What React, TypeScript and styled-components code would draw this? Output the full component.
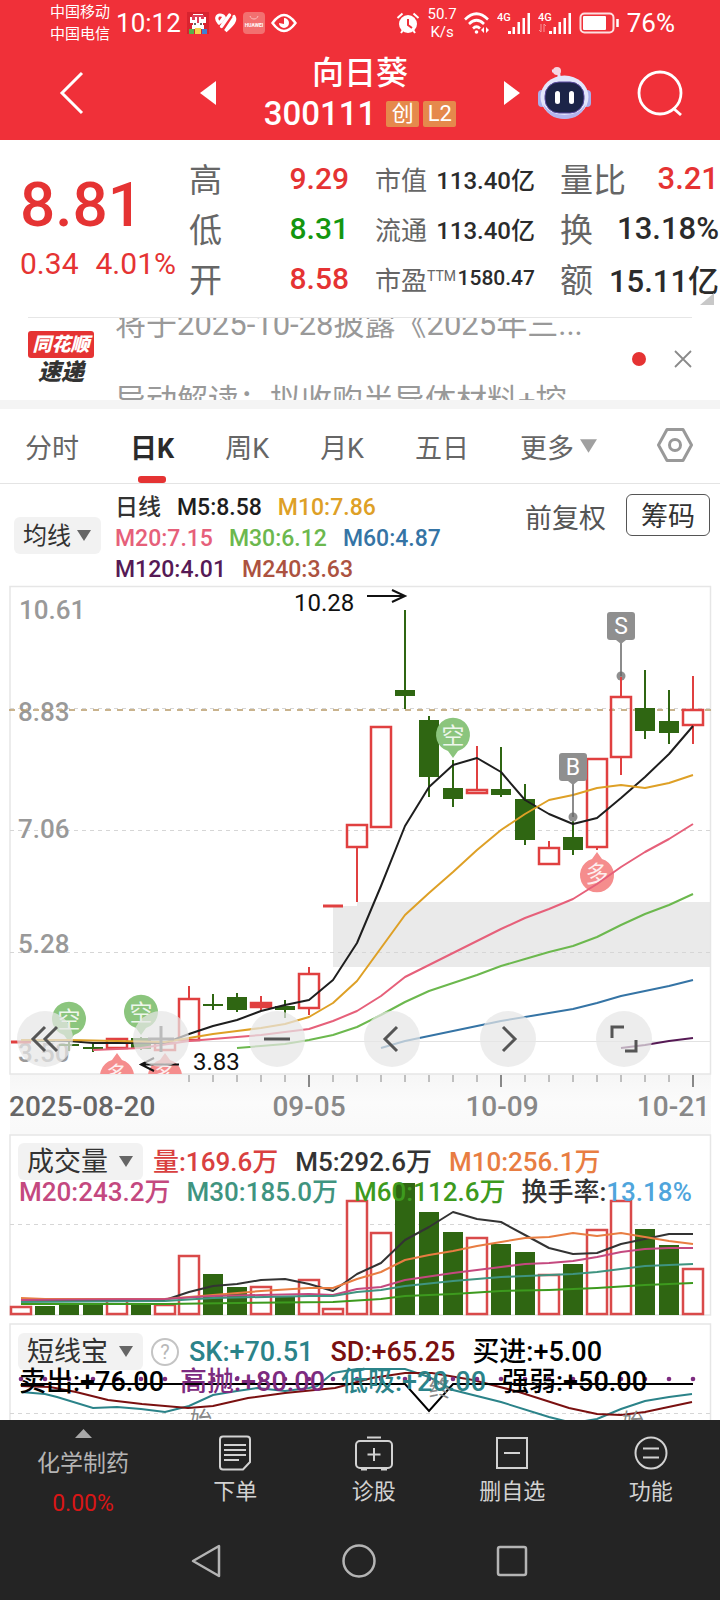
import React from "react";
import styled, { createGlobalStyle } from "styled-components";

const GlobalStyle = createGlobalStyle`
  * { box-sizing: border-box; }
  body {
    margin: 0;
    background: #242424;
    font-family: Roboto, "Noto Sans CJK SC", sans-serif;
    color: #333;
  }
  button, select {
    font-family: inherit;
    color: inherit;
    border: 0;
    padding: 0;
    margin: 0;
    background: none;
  }
  svg { display: block; }
  svg text { font-family: Roboto, "Noto Sans CJK SC", sans-serif; }
`;

const RED = "#e53333";
const UP = "#e04040";
const DOWN = "#2f6612";

const Page = styled.div`
  min-height: 100vh;
  display: flex;
  flex-direction: column;
  overflow: hidden;
`;

const Main = styled.main`
  background: #fff;
`;

/* ---------- status bar ---------- */

const StatusBar = styled.div`
  height: 46px;
  padding: 0 45px 0 50px;
  background: #f03039;
  color: #fff;
  display: flex;
  justify-content: space-between;
  align-items: center;
`;

const StatusGroup = styled.div<{ $gap: number }>`
  display: flex;
  align-items: center;
  gap: ${(p) => p.$gap}px;
`;

const Carriers = styled.div`
  font-size: 15px;
  line-height: 22px;
`;

const StatusText = styled.span`
  font-size: 26px;
  line-height: 30px;
`;

const Speed = styled.div`
  font-size: 15px;
  line-height: 18px;
  text-align: center;
`;

/* ---------- title bar ---------- */

const Header = styled.header`
  height: 94px;
  padding: 0 36px 0 50px;
  background: #f03039;
  color: #fff;
  display: grid;
  grid-template-columns: 150px 1fr 116px 48px;
  align-items: center;
`;

const IconButton = styled.button`
  display: flex;
  align-items: center;
  cursor: pointer;
`;

const HeaderTitle = styled.div`
  display: flex;
  align-items: center;
  justify-content: space-between;
`;

const StockName = styled.h1`
  margin: 0;
  font-size: 32px;
  line-height: 42px;
  font-weight: 500;
  text-align: center;
`;

const StockCode = styled.div`
  display: flex;
  align-items: center;
  justify-content: center;
  gap: 4px;
  font-size: 33px;
  line-height: 40px;
  font-weight: 500;
`;

const Badge = styled.span`
  background: #e5894c;
  border-radius: 2px;
  width: 33px;
  font-size: 22px;
  line-height: 26px;
  font-weight: 400;
  text-align: center;
  &:first-of-type { margin-left: 6px; }
`;

/* ---------- quote ---------- */

const Quote = styled.section`
  height: 177px;
  padding: 13px 1px 0 20px;
  display: grid;
  grid-template-columns: 169px 160px 26px 160px 25px 1fr;
  position: relative;
`;

const PriceBlock = styled.div`
  color: ${RED};
  padding-top: 15px;
`;

const Price = styled.div`
  font-size: 62px;
  line-height: 74px;
  font-weight: 500;
`;

const Change = styled.div`
  display: flex;
  gap: 17px;
  font-size: 30px;
  line-height: 44px;
`;

const Stats = styled.dl<{ $column: number; $label: number; $value: number }>`
  margin: 0;
  grid-column: ${(p) => p.$column};
  font-size: ${(p) => p.$label}px;
  --value-size: ${(p) => p.$value}px;
`;

const Stat = styled.div`
  display: flex;
  justify-content: space-between;
  align-items: center;
  height: 50px;
  white-space: nowrap;
`;

const StatLabel = styled.dt`
  color: #666;
  sup {
    font-size: 14px;
    line-height: 1;
    vertical-align: 9px;
  }
`;

const StatValue = styled.dd<{ $color?: string; $small?: boolean }>`
  margin: 0;
  font-size: ${(p) => (p.$small ? "21px" : "var(--value-size)")};
  font-weight: 500;
  color: ${(p) => p.$color || "#2b2b2b"};
`;

const Corner = styled.svg`
  position: absolute;
  right: 6px;
  bottom: 12px;
`;

/* ---------- news ---------- */

const News = styled.section`
  height: 83px;
  margin: 0 28px;
  border-top: 1px solid #e6e6e6;
  display: flex;
  align-items: center;
`;

const NewsLogo = styled.div`
  width: 87px;
  font-weight: 900;
  font-style: italic;
`;

const LogoTop = styled.div`
  width: 66px;
  background: ${RED};
  color: #fff;
  border-radius: 3px;
  font-size: 19px;
  line-height: 27px;
  text-align: center;
`;

const LogoBottom = styled.div`
  width: 66px;
  font-size: 23px;
  line-height: 29px;
  text-align: center;
`;

const Ticker = styled.div`
  flex: 1;
  height: 82px;
  overflow: hidden;
  color: #999;
  font-size: 31px;
  white-space: nowrap;
`;

const TickerLine = styled.div`
  height: 76px;
  line-height: 76px;
  margin-top: -31px;
  & + & { margin-top: 0; }
`;

const RedDot = styled.span`
  width: 14px;
  height: 14px;
  border-radius: 50%;
  background: ${RED};
  margin-right: 28px;
`;

const Divider = styled.div`
  height: 9px;
  background: #f4f4f4;
`;

/* ---------- tabs ---------- */

const Tabs = styled.nav`
  height: 75px;
  padding: 0 27px 0 25px;
  border-bottom: 1px solid #e4e4e4;
  display: flex;
  align-items: stretch;
  gap: 51px;
`;

const Tab = styled.button<{ $active?: boolean }>`
  display: flex;
  align-items: center;
  gap: 6px;
  font-size: 27px;
  color: ${(p) => (p.$active ? "#2b2b2b" : "#666")};
  font-weight: ${(p) => (p.$active ? 700 : 400)};
  position: relative;
  white-space: nowrap;
  cursor: pointer;
  &::after {
    content: "";
    display: ${(p) => (p.$active ? "block" : "none")};
    position: absolute;
    left: 50%;
    bottom: 0;
    margin-left: -14px;
    width: 28px;
    height: 7px;
    border-radius: 3px;
    background: ${RED};
  }
`;

const Settings = styled(IconButton)`
  margin-left: auto;
  padding-bottom: 2px;
`;

/* ---------- legends ---------- */

const LegendBar = styled.section`
  height: 96px;
  padding: 0 10px 0 14px;
  display: flex;
  align-items: flex-start;
`;

const PickerBox = styled.span<{ $width: number }>`
  display: inline-grid;
  align-items: center;
  width: ${(p) => p.$width}px;
  height: 37px;
  background: #f2f2f2;
  border-radius: 6px;
  & > * { grid-area: 1 / 1; }
  & > svg {
    justify-self: end;
    margin-right: 10px;
    pointer-events: none;
  }
`;

const PickerSelect = styled.select<{ $size: number }>`
  appearance: none;
  width: 100%;
  height: 37px;
  padding-left: 9px;
  font-size: ${(p) => p.$size}px;
  color: #333;
`;

const MaPicker = styled.div`
  width: 101px;
  padding-top: 33px;
`;

const MaLegend = styled.div`
  flex: 1;
  padding-top: 8px;
  font-size: 23px;
  line-height: 31px;
  font-weight: 500;
`;

const LegendRow = styled.div`
  display: flex;
  gap: 16px;
  white-space: nowrap;
`;

const Tint = styled.span<{ $color: string }>`
  color: ${(p) => p.$color};
`;

const Adjust = styled.button`
  font-size: 27px;
  line-height: 40px;
  padding-top: 15px;
  margin-right: 20px;
  color: #555;
`;

const ChipButton = styled.button`
  width: 84px;
  height: 42px;
  margin-top: 10px;
  padding-top: 2px;
  border: 1px solid #555;
  border-radius: 6px;
  font-size: 27px;
  line-height: 40px;
  color: #333;
`;

/* ---------- charts ---------- */

const ChartPanel = styled.section`
  position: relative;
  & > svg { width: 100%; height: auto; }
`;

const ChartTools = styled.div`
  position: absolute;
  left: 17px;
  right: 68px;
  bottom: 63px;
  display: flex;
  justify-content: space-between;
`;

const ToolButton = styled.button`
  width: 56px;
  height: 56px;
  border-radius: 50%;
  background: rgba(230, 230, 230, 0.72);
  display: flex;
  align-items: center;
  justify-content: center;
  color: #555;
  &:disabled { color: #bbb; }
`;

const OverlayPanel = styled.section`
  display: grid;
  & > * { grid-area: 1 / 1; }
  & > svg { width: 100%; height: auto; }
`;

const OverlayLegend = styled.div<{ $size: number }>`
  padding: 13px 18px 0;
  font-size: ${(p) => p.$size}px;
  line-height: 30px;
  font-weight: 500;
`;

const LegendHead = styled.div`
  display: flex;
  align-items: center;
  gap: 17px;
  height: 37px;
  white-space: nowrap;
  & > :first-child { margin-right: -7px; }
`;

const LegendTail = styled(LegendRow)`
  padding-left: 1px;
  margin-top: -3px;
`;

const Help = styled.button`
  width: 28px;
  height: 28px;
  margin: 0 -7px 0 -2px;
  border: 2px solid #c4c4c4;
  border-radius: 50%;
  font-size: 20px;
  line-height: 24px;
  color: #b8b8b8;
`;

/* ---------- bottom ---------- */

const BottomBar = styled.footer`
  background: #242424;
  color: #d2d2d2;
  display: grid;
  grid-template-columns: 166px repeat(4, 1fr);
  height: 110px;
`;

const BottomButton = styled.button`
  display: flex;
  flex-direction: column;
  align-items: center;
  padding-top: 15px;
  gap: 3px;
  font-size: 22px;
  line-height: 36px;
`;

const Sector = styled.button`
  display: flex;
  flex-direction: column;
  align-items: center;
  padding-top: 9px;
  font-size: 23px;
  line-height: 40px;
  color: #b4b4b4;
  & > svg { margin-bottom: 6px; }
`;

const SectorChange = styled.span`
  color: #d81616;
`;

const NavBar = styled.nav`
  background: #242424;
  height: 70px;
  padding: 0 190px;
  display: flex;
  justify-content: space-between;
  & > button { height: 62px; }
`;

/* ---------- data ---------- */

type Pt = [number, number];
type Candle = { up: boolean; top: number; bottom: number; high: number; low: number };

const slot = (i: number) => 21 + 24 * i;
const c = (up: number, top: number, bottom: number, high: number, low: number): Candle => ({
  up: up === 1, top, bottom, high, low,
});

const candles: Candle[] = [
  c(1, 462, 462, 462, 462), c(0, 461, 461, 461, 461), c(0, 465, 465, 460, 471), c(0, 468, 468, 463, 472),
  c(1, 459, 468, 458, 469), c(0, 458, 469, 457, 470), c(1, 463, 470, 462, 470), c(1, 419, 460, 406, 461),
  c(0, 425, 425, 414, 430), c(0, 417, 430, 413, 432), c(1, 423, 427, 416, 431), c(0, 426, 430, 420, 438),
  c(1, 394, 428, 387, 435), c(1, 326, 326, 326, 326), c(1, 245, 267, 245, 322), c(1, 147, 247, 147, 247),
  c(0, 110, 116, 30, 129), c(0, 140, 197, 136, 217), c(0, 208, 219, 180, 227), c(1, 210, 213, 166, 213),
  c(0, 209, 215, 167, 217), c(0, 219, 260, 204, 265), c(1, 268, 284, 261, 284), c(0, 257, 270, 238, 275),
  c(1, 179, 267, 179, 270), c(1, 117, 177, 95, 195), c(0, 128, 151, 90, 159), c(0, 141, 153, 110, 164),
  c(1, 130, 145, 96, 164),
];

const priceLines: { color: string; points: Pt[] }[] = [
  { color: "#1e1e1e", points: [[21, 460], [69, 461], [93, 463], [117, 463], [165, 463], [189, 454], [213, 446], [237, 440], [261, 431], [285, 425], [309, 420], [333, 400], [357, 363], [381, 306], [405, 246], [429, 207], [453, 185], [477, 178], [501, 192], [525, 220], [549, 234], [573, 244], [597, 238], [621, 218], [645, 197], [669, 174], [693, 146]] },
  { color: "#dea026", points: [[21, 460], [45, 460], [69, 460], [117, 461], [165, 462], [189, 458], [213, 454], [237, 451], [261, 448], [285, 444], [309, 437], [333, 423], [357, 401], [381, 368], [405, 335], [429, 313], [453, 292], [477, 270], [501, 250], [525, 234], [549, 220], [573, 215], [597, 208], [621, 205], [645, 208], [669, 203], [693, 195]] },
  { color: "#e6607a", points: [[93, 470], [141, 468], [189, 461], [237, 457], [261, 455], [285, 452], [309, 449], [333, 441], [357, 431], [381, 416], [405, 397], [429, 385], [453, 373], [477, 361], [501, 349], [525, 338], [549, 329], [573, 319], [597, 304], [621, 287], [645, 272], [669, 259], [693, 244]] },
  { color: "#6cb84e", points: [[237, 468], [261, 466], [285, 464], [309, 460], [333, 455], [357, 447], [381, 435], [405, 422], [429, 411], [453, 403], [477, 395], [501, 386], [525, 379], [549, 372], [573, 366], [597, 357], [621, 345], [645, 334], [669, 325], [693, 314]] },
  { color: "#3574a5", points: [[381, 468], [405, 461], [429, 456], [453, 451], [501, 441], [549, 433], [573, 429], [597, 423], [621, 416], [645, 411], [669, 406], [693, 400]] },
  { color: "#561a55", points: [[621, 468], [645, 465], [669, 461], [693, 458]] },
];

const volumes = [182, 181, 180, 180, 175, 179, 180, 131, 149, 162, 162, 172, 155, 184, 76, 108, 58, 87, 107, 113, 119, 127, 150, 139, 105, 76, 104, 120, 144];

const volumeLines: { color: string; points: Pt[] }[] = [
  { color: "#333", points: [[21, 175], [165, 175], [189, 167], [213, 161], [237, 159], [261, 155], [285, 154], [309, 159], [333, 166], [357, 149], [381, 138], [405, 115], [429, 102], [453, 87], [477, 94], [501, 97], [525, 110], [549, 123], [573, 129], [597, 128], [621, 119], [645, 114], [669, 109], [693, 109]] },
  { color: "#e87d42", points: [[21, 173], [45, 174], [165, 174], [189, 172], [213, 170], [261, 166], [309, 163], [333, 163], [357, 154], [381, 147], [405, 135], [429, 130], [453, 126], [477, 121], [501, 117], [525, 113], [549, 112], [573, 108], [597, 111], [621, 108], [645, 112], [669, 116], [693, 119]] },
  { color: "#c4497f", points: [[21, 175], [165, 174], [213, 171], [261, 170], [309, 169], [333, 170], [357, 164], [381, 162], [405, 155], [453, 148], [501, 142], [525, 139], [549, 138], [573, 136], [597, 132], [621, 127], [645, 124], [669, 123], [693, 123]] },
  { color: "#3f9480", points: [[21, 177], [165, 176], [213, 173], [309, 171], [333, 171], [357, 167], [381, 165], [405, 161], [453, 156], [501, 152], [549, 150], [573, 149], [597, 147], [621, 144], [645, 141], [693, 139]] },
  { color: "#3d9a1e", points: [[21, 179], [165, 179], [237, 178], [333, 177], [381, 174], [405, 171], [453, 169], [501, 166], [549, 165], [597, 163], [645, 160], [693, 158]] },
];

const sk: Pt[] = [[21, 72], [45, 74], [57, 77], [93, 88], [117, 87], [141, 89], [165, 92], [189, 86], [213, 75], [237, 71], [257, 68], [285, 71], [309, 68], [317, 66], [333, 53], [357, 49], [405, 49], [429, 57], [453, 70], [501, 82], [549, 97], [573, 103], [597, 99], [621, 89], [645, 81], [669, 77], [692, 74]];
const sd: Pt[] = [[21, 66], [50, 67], [76, 72], [108, 80], [142, 84], [188, 88], [213, 86], [248, 78], [285, 73], [335, 68], [372, 58], [405, 53], [432, 53], [473, 60], [519, 72], [569, 88], [597, 94], [621, 95], [645, 92], [692, 82]];

const path = (pts: Pt[]) => pts.map((p) => p.join(",")).join(" ");

const Triangle = ({ size = 14, color = "#666" }: { size?: number; color?: string }) => (
  <svg width={size} height={size - 3} viewBox="0 0 14 11"><path d="M0 0h14L7 11z" fill={color} /></svg>
);

const Picker = ({ label, width, size, options }: { label: string; width: number; size: number; options: string[] }) => (
  <PickerBox $width={width}>
    <PickerSelect $size={size} aria-label={label}>
      {options.map((o) => <option key={o}>{o}</option>)}
    </PickerSelect>
    <Triangle />
  </PickerBox>
);

const Pin = ({ x, y, up, label }: { x: number; y: number; up: boolean; label: string }) => (
  <g>
    <path
      d={up
        ? `M${x} ${y - 22}l5 7a17 17 0 1 1 -10 0z`
        : `M${x} ${y + 22}l5 -7a17 17 0 1 0 -10 0z`}
      fill={up ? "#f58d8d" : "#8bc57d"}
    />
    <text x={x} y={y + 8} fontSize="23" textAnchor="middle" fill="#fff" opacity="0.85">{label}</text>
  </g>
);

const Signal = ({ x, top, dot, label }: { x: number; top: number; dot: number; label: string }) => (
  <g>
    <circle cx={x} cy={dot} r="4.5" fill="#8f8f8f" />
    <path d={`M${x} ${top + 28}V${dot}`} stroke="#666" strokeWidth="1.5" />
    <rect x={x - 14} y={top} width="28" height="28" rx="3" fill="#8f8f8f" />
    <path d={`M${x - 5} ${top + 28}h10l-5 4z`} fill="#8f8f8f" />
    <text x={x} y={top + 22} fontSize="23" textAnchor="middle" fill="#fff">{label}</text>
  </g>
);

const PriceChart = () => (
  <svg viewBox="0 0 720 550" role="img" aria-label="日K线图">
    <defs>
      <clipPath id="plot"><rect x="9" y="6" width="702" height="488" /></clipPath>
      <linearGradient id="axis" x1="0" y1="0" x2="0" y2="1">
        <stop offset="0" stopColor="#f6f6f6" /><stop offset="0.5" stopColor="#fbfbfb" /><stop offset="1" stopColor="#f9f9f9" />
      </linearGradient>
    </defs>
    <rect x="10" y="494" width="701" height="56" fill="url(#axis)" />
    <path d="M333 326H357V322H711V387H333z" fill="#eaeaea" />
    <rect x="10" y="6.5" width="700.5" height="487.5" fill="none" stroke="#e6e6e6" strokeWidth="1.5" />
    {[128.5, 250.5, 372.5].map((y) => (
      <path key={y} d={`M10 ${y}H710`} stroke="#d6d6d6" strokeDasharray="4 4" />
    ))}
    <path d="M10 461.500H710" stroke="#e2e2e2" />
    <g fontSize="26" fontWeight="500" fill="#999">
      <text x="19" y="39">10.61</text>
      <text x="18" y="141">8.83</text>
      <text x="18" y="258">7.06</text>
      <text x="18" y="373">5.28</text>
      <text x="18" y="482">3.50</text>
    </g>
    <path d="M9 130H711" stroke="#b89a68" strokeWidth="1.500" strokeDasharray="6 6" />
    <g clipPath="url(#plot)">
      {candles.map((k, i) => {
        const x = slot(i);
        const color = k.up ? UP : DOWN;
        const flat = k.bottom === k.top;
        return (
          <g key={i} stroke={color} strokeWidth="2">
            {k.high < k.top && <path d={`M${x} ${k.high}V${k.top}`} />}
            {k.low > k.bottom && <path d={`M${x} ${k.bottom}V${k.low}`} />}
            {flat && <path d={`M${x - 10} ${k.top}H${x + 10}`} strokeWidth={k.up ? 3 : 2} />}
            {!flat && k.up && <rect x={x - 10} y={k.top} width="20" height={k.bottom - k.top} fill={i === 10 ? UP : "none"} strokeWidth="2.5" />}
            {!flat && !k.up && <rect x={x - 10} y={k.top} width="20" height={k.bottom - k.top} fill={color} stroke="none" />}
          </g>
        );
      })}
      <Pin x={453} y={156} up={false} label="空" />
      <Pin x={69} y={440} up={false} label="空" />
      <Pin x={141} y={433} up={false} label="空" />
      <Pin x={597} y={294} up label="多" />
      <Pin x={117} y={495} up label="多" />
      <Pin x={165} y={495} up label="多" />
      {priceLines.map((l) => (
        <polyline key={l.color} points={path(l.points)} fill="none" stroke={l.color} strokeWidth="2" strokeLinejoin="round" />
      ))}
      <Signal x={621} top={32} dot={96} label="S" />
      <Signal x={573} top={173} dot={237} label="B" />
      <path d="M621 97V115" stroke={UP} strokeWidth="2" />
    </g>
    <g fontSize="24" fill="#111">
      <text x="294" y="31">10.28</text>
      <text x="193" y="490">3.83</text>
    </g>
    <path d="M367 16H405M392 10l13 6-13 6M179 484.500H141M154 478l-13 6.500 13 6.500" fill="none" stroke="#111" strokeWidth="2" />
    {candles.map((_, i) => {
      if (i < 7) return null;
      const major = i === 12 || i === 20 || i === 28;
      return <path key={i} d={`M${slot(i)} 495V${major ? 507 : 502}`} stroke="#888" strokeWidth={major ? 2 : 1} />;
    })}
    <g fontSize="28" fontWeight="500" fill="#888">
      <text x="9" y="536" fill="#666">2025-08-20</text>
      <text x="309" y="536" textAnchor="middle">09-05</text>
      <text x="502" y="536" textAnchor="middle">10-09</text>
      <text x="710" y="536" textAnchor="end">10-21</text>
    </g>
  </svg>
);

const VolumeChart = () => (
  <svg viewBox="0 5 720 190" role="img" aria-label="成交量图">
    <rect x="10" y="5" width="701" height="5" fill="#f9f9f9" />
    <rect x="10" y="10" width="700.5" height="180" fill="#fff" stroke="#e6e6e6" strokeWidth="1.5" />
    <path d="M10 99.500H710" stroke="#d6d6d6" strokeDasharray="4 4" />
    {volumes.map((y, i) =>
      candles[i].up
        ? <rect key={i} x={slot(i) - 10} y={y} width="20" height={189 - y} fill="#fff" stroke="#d94a4a" strokeWidth="2.5" />
        : <rect key={i} x={slot(i) - 10} y={y} width="20" height={190 - y} fill={DOWN} />
    )}
    {volumeLines.map((l) => (
      <polyline key={l.color} points={path(l.points)} fill="none" stroke={l.color} strokeWidth="2" strokeLinejoin="round" />
    ))}
  </svg>
);

const IndicatorChart = () => (
  <svg viewBox="0 0 720 100" role="img" aria-label="短线宝图">
    <rect x="10" y="4" width="700.5" height="110" fill="#fff" stroke="#e6e6e6" strokeWidth="1.500" />
    <path d="M10 93.500H710" stroke="#d6d6d6" strokeDasharray="4 4" />
    <polyline points={path(sk)} fill="none" stroke="#2b8389" strokeWidth="2" />
    <polyline points={path(sd)} fill="none" stroke="#7a1010" strokeWidth="2" />
    <path d="M21 64H405L429 91L453 64H693" fill="none" stroke="#000" strokeWidth="2" />
    {candles.map((_, i) => <circle key={i} cx={slot(i)} cy="59" r="2.3" fill="#7d2b80" />)}
    <g fontSize="22" fill="#888">
      <text x="190" y="107">始</text>
      <text x="622" y="109">始</text>
      <text x="429" y="76">终</text>
    </g>
  </svg>
);

const SignalBars = ({ faded }: { faded?: boolean }) => (
  <svg width="34" height="24" viewBox="0 0 34 24" fill="#fff">
    <text x="0" y="10" fontSize="11" fontWeight="500">4G</text>
    {faded && <path d="M3 13v8M1 19l2 2M6 21v-8M6 13l2 2" stroke="#fff" opacity="0.5" />}
    <path d="M11 20h3v3h-3zM15.500 16h2.500v7h-2.500zM20.500 11h2.500v12h-2.500zM25.500 7h2.500v16h-2.500zM30.500 2h2.500v21h-2.500z" />
  </svg>
);

export default function App() {
  return (
    <Page>
      <GlobalStyle />
      <StatusBar>
        <StatusGroup $gap={6}>
          <Carriers>中国移动<br />中国电信</Carriers>
          <StatusText>10:12</StatusText>
          <svg width="22" height="22" viewBox="0 0 22 22">
            <rect width="22" height="22" fill="#d8232f" />
            <path d="M3 5h3V2h10v3h3v6h-3v3H6v-3H3z" fill="#fff" />
            <path d="M5 3h12v4h-3V5h-2v6h-2V5H8v3H5z" fill="#e0405a" />
            <path d="M5 13h12v4H5z" fill="#fff" />
            <path d="M2 17h5v5H2z" fill="#58b04c" /><path d="M8 16h6v6H8z" fill="#f6d24c" /><path d="M15 17h5v5h-5z" fill="#3f7fd4" />
            <circle cx="8" cy="12" r="1" fill="#333" /><circle cx="14" cy="12" r="1" fill="#333" />
          </svg>
          <svg width="22" height="22" viewBox="0 0 22 22" fill="none" stroke="#fff" strokeWidth="3.200" strokeLinecap="round">
            <path d="M4 11C0 7 2 3 5 3Q8 3 9 5L5.500 10M14.500 3L6.500 14.500M19 4.500c3 5-4 10-8.500 14.500L19 6" />
          </svg>
          <svg width="22" height="22" viewBox="0 0 22 22">
            <rect width="22" height="22" rx="4" fill="#f27070" />
            <path d="M7 4c1 4 7 4 8 0" fill="none" stroke="#fbc0c0" />
            <text x="11" y="15" fontSize="5" fontWeight="700" textAnchor="middle" fill="#fff">HUAWEI</text>
          </svg>
          <svg width="26" height="20" viewBox="0 0 26 20" fill="none" stroke="#fff" strokeWidth="2.400">
            <path d="M1.500 10Q13-6 24.500 10Q13 26 1.500 10z" />
            <path d="M13 5a5 5 0 1 1-5 5l5 1z" fill="#fff" stroke="none" />
          </svg>
        </StatusGroup>
        <StatusGroup $gap={7}>
          <svg width="24" height="22" viewBox="0 0 24 22">
            <circle cx="12" cy="12" r="9" fill="#fff" />
            <path d="M1.500 6l5-4.500M22.500 6l-5-4.500M5 21l2-3M19 21l-2-3" stroke="#fff" strokeWidth="2" />
            <path d="M12 7v6l4 3" fill="none" stroke="#f03039" strokeWidth="2" />
          </svg>
          <Speed>50.7<br />K/s</Speed>
          <svg width="26" height="24" viewBox="0 0 26 24" fill="none" stroke="#fff" strokeWidth="2.600">
            <path d="M1 8.500Q12.500-3 24 8.500M5 13Q12.500 5.500 20 13M9 17.500Q12.500 14 16 17.500" />
            <circle cx="12.500" cy="21" r="1.800" fill="#fff" stroke="none" />
            <path d="M20 16v6l-3-3zM22 16v6l3-3z" fill="#fff" stroke="none" />
          </svg>
          <SignalBars />
          <SignalBars faded />
          <svg width="41" height="22" viewBox="0 0 41 22">
            <rect x="1.500" y="1.500" width="33" height="19" rx="4" fill="none" stroke="#fff" strokeWidth="2" opacity="0.85" />
            <rect x="4" y="4" width="23" height="14" rx="1" fill="#fff" />
            <path d="M38.500 7v8" stroke="#fff" strokeWidth="2.500" />
          </svg>
          <StatusText>76%</StatusText>
        </StatusGroup>
      </StatusBar>

      <Header>
        <IconButton aria-label="返回">
          <svg width="44" height="44" viewBox="0 0 44 44"><path d="M32 2L12 22l20 20" fill="none" stroke="#fff" strokeWidth="3" /></svg>
        </IconButton>
        <HeaderTitle>
          <IconButton aria-label="上一只">
            <svg width="16" height="24" viewBox="0 0 16 24"><path d="M16 0v24L0 12z" fill="#fff" /></svg>
          </IconButton>
          <div>
            <StockName>向日葵</StockName>
            <StockCode>300111<Badge>创</Badge><Badge>L2</Badge></StockCode>
          </div>
          <IconButton aria-label="下一只">
            <svg width="16" height="24" viewBox="0 0 16 24"><path d="M0 0v24l16-12z" fill="#fff" /></svg>
          </IconButton>
        </HeaderTitle>
        <IconButton aria-label="智能助手">
          <svg width="82" height="54" viewBox="-6 0 82 54">
            <path d="M33 12Q34 4 26 5" fill="none" stroke="#dfe3fb" strokeWidth="3" />
            <circle cx="31" cy="5" r="4" fill="#f6d5e2" />
            <rect x="12" y="24" width="8" height="17" rx="4" fill="#a9aeea" />
            <rect x="57" y="24" width="8" height="17" rx="4" fill="#a9aeea" />
            <ellipse cx="38.500" cy="31" rx="24" ry="21.500" fill="#e3e6fb" />
            <path d="M17 38q5 15 21.500 15T60 38q-7 11-21.500 11T17 38z" fill="#b3b5ee" />
            <rect x="19" y="16" width="39" height="31" rx="14" fill="#1c2448" stroke="#5a4aa0" />
            <rect x="29" y="25" width="5" height="13" rx="2.500" fill="#fff" />
            <rect x="43" y="25" width="5" height="13" rx="2.500" fill="#fff" />
          </svg>
        </IconButton>
        <IconButton aria-label="搜索">
          <svg width="48" height="46" viewBox="0 0 48 46" fill="none" stroke="#fff" strokeWidth="2.800">
            <circle cx="24" cy="23" r="21" /><path d="M37 38l8 7" />
          </svg>
        </IconButton>
      </Header>

      <Main>
        <Quote>
          <PriceBlock>
            <Price>8.81</Price>
            <Change><span>0.34</span><span>4.01%</span></Change>
          </PriceBlock>
          <Stats $column={2} $label={33} $value={30}>
            <Stat><StatLabel>高</StatLabel><StatValue $color={RED}>9.29</StatValue></Stat>
            <Stat><StatLabel>低</StatLabel><StatValue $color="#14960f">8.31</StatValue></Stat>
            <Stat><StatLabel>开</StatLabel><StatValue $color={RED}>8.58</StatValue></Stat>
          </Stats>
          <Stats $column={4} $label={26} $value={24}>
            <Stat><StatLabel>市值</StatLabel><StatValue>113.40亿</StatValue></Stat>
            <Stat><StatLabel>流通</StatLabel><StatValue>113.40亿</StatValue></Stat>
            <Stat><StatLabel>市盈<sup>TTM</sup></StatLabel><StatValue $small>1580.47</StatValue></Stat>
          </Stats>
          <Stats $column={6} $label={33} $value={31}>
            <Stat><StatLabel>量比</StatLabel><StatValue $color={RED}>3.21</StatValue></Stat>
            <Stat><StatLabel>换</StatLabel><StatValue>13.18%</StatValue></Stat>
            <Stat><StatLabel>额</StatLabel><StatValue>15.11亿</StatValue></Stat>
          </Stats>
          <Corner width="14" height="12" viewBox="0 0 14 12"><path d="M14 0v12H0z" fill="#c8c8c8" /></Corner>
        </Quote>

        <News>
          <NewsLogo>
            <LogoTop>同花顺</LogoTop>
            <LogoBottom>速递</LogoBottom>
          </NewsLogo>
          <Ticker>
            <TickerLine>将于2025-10-28披露《2025年三...</TickerLine>
            <TickerLine>异动解读：拟收购半导体材料+控</TickerLine>
          </Ticker>
          <RedDot />
          <IconButton aria-label="关闭">
            <svg width="18" height="18" viewBox="0 0 18 18"><path d="M1 1l16 16M17 1L1 17" stroke="#8a8a8a" strokeWidth="1.800" /></svg>
          </IconButton>
        </News>
        <Divider />

        <Tabs>
          <Tab>分时</Tab>
          <Tab $active>日K</Tab>
          <Tab>周K</Tab>
          <Tab>月K</Tab>
          <Tab>五日</Tab>
          <Tab aria-haspopup="menu">更多<Triangle size={17} color="#a0a0a0" /></Tab>
          <Settings aria-label="设置">
            <svg width="36" height="36" viewBox="0 0 36 36" fill="none" stroke="#999" strokeWidth="3">
              <path d="M10 2.500h16L34.500 18 26 33.500H10L1.500 18z" strokeLinejoin="round" /><circle cx="18" cy="18" r="5.500" />
            </svg>
          </Settings>
        </Tabs>

        <LegendBar>
          <MaPicker><Picker label="主图指标" width={87} size={24} options={["均线", "BOLL"]} /></MaPicker>
          <MaLegend>
            <LegendRow><span>日线</span><Tint $color="#1e1e1e">M5:8.58</Tint><Tint $color="#dea026">M10:7.86</Tint></LegendRow>
            <LegendRow><Tint $color="#e6607a">M20:7.15</Tint><Tint $color="#6cb84e">M30:6.12</Tint><Tint $color="#3574a5">M60:4.87</Tint></LegendRow>
            <LegendRow><Tint $color="#561a55">M120:4.01</Tint><Tint $color="#ac5240">M240:3.63</Tint></LegendRow>
          </MaLegend>
          <Adjust>前复权</Adjust>
          <ChipButton>筹码</ChipButton>
        </LegendBar>

        <ChartPanel>
          <PriceChart />
          <ChartTools>
            <ToolButton aria-label="最早">
              <svg width="30" height="28" viewBox="0 0 30 28" fill="none" stroke="currentColor" strokeWidth="3"><path d="M15 2L3 14l12 12M27 2L15 14l12 12" /></svg>
            </ToolButton>
            <ToolButton aria-label="放大" disabled>
              <svg width="28" height="28" viewBox="0 0 28 28" stroke="currentColor" strokeWidth="3"><path d="M14 1v26M1 14h26" /></svg>
            </ToolButton>
            <ToolButton aria-label="缩小">
              <svg width="26" height="26" viewBox="0 0 26 26" stroke="currentColor" strokeWidth="3"><path d="M0 13h26" /></svg>
            </ToolButton>
            <ToolButton aria-label="向前">
              <svg width="20" height="28" viewBox="0 0 20 28" fill="none" stroke="currentColor" strokeWidth="3"><path d="M15 2L3 14l12 12" /></svg>
            </ToolButton>
            <ToolButton aria-label="向后">
              <svg width="20" height="28" viewBox="0 0 20 28" fill="none" stroke="currentColor" strokeWidth="3"><path d="M5 2l12 12L5 26" /></svg>
            </ToolButton>
            <ToolButton aria-label="全屏">
              <svg width="28" height="28" viewBox="0 0 28 28" fill="none" stroke="currentColor" strokeWidth="3"><path d="M2 13V2h12M26 15v11H15" /></svg>
            </ToolButton>
          </ChartTools>
        </ChartPanel>

        <OverlayPanel>
          <VolumeChart />
          <OverlayLegend $size={26}>
            <LegendHead>
              <Picker label="副图指标一" width={125} size={27} options={["成交量", "MACD"]} />
              <Tint $color="#d94040">量:169.6万</Tint><Tint $color="#333">M5:292.6万</Tint><Tint $color="#e87d42">M10:256.1万</Tint>
            </LegendHead>
            <LegendTail>
              <Tint $color="#c4497f">M20:243.2万</Tint><Tint $color="#3f9480">M30:185.0万</Tint><Tint $color="#3d9a1e">M60:112.6万</Tint>
              <Tint $color="#333">换手率:<Tint $color="#4fa5dc">13.18%</Tint></Tint>
            </LegendTail>
          </OverlayLegend>
        </OverlayPanel>

        <OverlayPanel>
          <IndicatorChart />
          <OverlayLegend $size={27}>
            <LegendHead>
              <Picker label="副图指标二" width={125} size={27} options={["短线宝", "KDJ"]} />
              <Help aria-label="说明">?</Help>
              <Tint $color="#2b8389">SK:+70.51</Tint><Tint $color="#7a1010">SD:+65.25</Tint><Tint $color="#000">买进:+5.00</Tint>
            </LegendHead>
            <LegendTail>
              <Tint $color="#000">卖出:+76.00</Tint><Tint $color="#7d2b80">高抛:+80.00</Tint><Tint $color="#2b8389">低吸:+20.00</Tint><Tint $color="#000">强弱:+50.00</Tint>
            </LegendTail>
          </OverlayLegend>
        </OverlayPanel>
      </Main>

      <BottomBar>
        <Sector>
          <svg width="17" height="9" viewBox="0 0 17 9"><path d="M0 9h17L8.500 0z" fill="#a8a8a8" /></svg>
          <span>化学制药</span>
          <SectorChange>0.00%</SectorChange>
        </Sector>
        <BottomButton>
          <svg width="36" height="36" viewBox="0 0 36 36" fill="none" stroke="#d2d2d2" strokeWidth="2">
            <path d="M6 1.500h24q3 0 3 3V27l-7 7.500H6q-3 0-3-3v-27q0-3 3-3zM7 10h22M7 15h22M7 20h22M7 25h15" />
          </svg>
          下单
        </BottomButton>
        <BottomButton>
          <svg width="38" height="36" viewBox="0 0 38 36" fill="none" stroke="#d2d2d2" strokeWidth="2">
            <rect x="1" y="6" width="36" height="27" rx="4" /><path d="M12 2.500h14M19 13v13M12.500 19.500h13M6 34.500h6M26 34.500h6" />
          </svg>
          诊股
        </BottomButton>
        <BottomButton>
          <svg width="34" height="36" viewBox="0 0 34 36" fill="none" stroke="#d2d2d2" strokeWidth="2">
            <rect x="2" y="3" width="30" height="30" /><path d="M9 18h16" />
          </svg>
          删自选
        </BottomButton>
        <BottomButton>
          <svg width="34" height="36" viewBox="0 0 34 36" fill="none" stroke="#d2d2d2" strokeWidth="2">
            <circle cx="17" cy="18" r="15.500" /><path d="M9 13.500h16M9 22.500h16" />
          </svg>
          功能
        </BottomButton>
      </BottomBar>

      <NavBar>
        <IconButton aria-label="返回">
          <svg width="32" height="36" viewBox="0 0 32 36"><path d="M29 3v30L3 18z" fill="none" stroke="#b4b4b4" strokeWidth="2.500" strokeLinejoin="round" /></svg>
        </IconButton>
        <IconButton aria-label="主屏幕">
          <svg width="36" height="36" viewBox="0 0 36 36"><circle cx="18" cy="18" r="15.500" fill="none" stroke="#b4b4b4" strokeWidth="2.500" /></svg>
        </IconButton>
        <IconButton aria-label="最近任务">
          <svg width="34" height="34" viewBox="0 0 34 34"><rect x="2" y="3" width="28" height="28" rx="2" fill="none" stroke="#b4b4b4" strokeWidth="2.500" /></svg>
        </IconButton>
      </NavBar>
    </Page>
  );
}
